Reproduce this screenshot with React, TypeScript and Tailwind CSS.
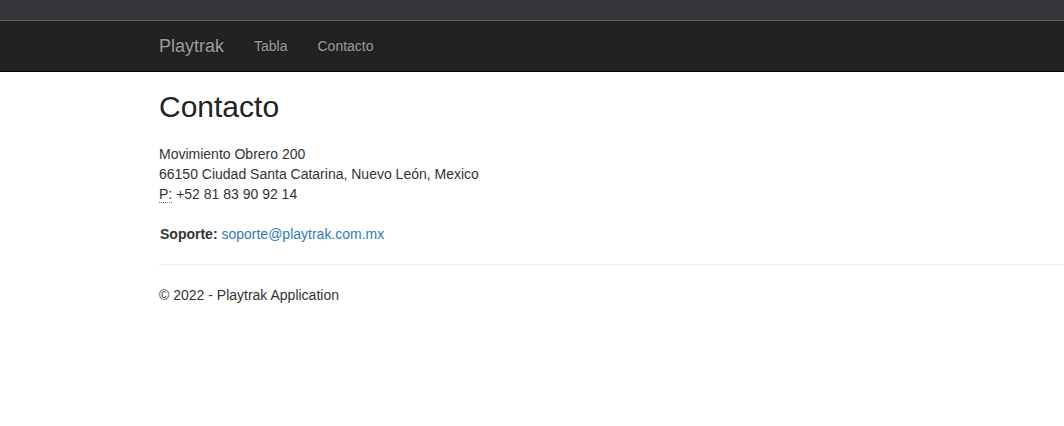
export default function App() {
  return (
    <div className="min-h-screen w-full bg-white text-[14px] leading-[20px] text-[#333] font-['Liberation_Sans',Arial,sans-serif]">
      <div className="h-[20px] bg-[#35363a]" />
      <div className="h-px bg-[#5f6064]" />
      <nav className="h-[51px] border-b border-[#080808] bg-[#222]">
        <div className="flex h-[50px] items-center pl-[159px]">
          <a className="text-[18px] leading-[20px] text-[#9d9d9d] [text-shadow:0_-1px_0_rgba(0,0,0,0.25)]">
            Playtrak
          </a>
          <ul className="ml-[15px] flex">
            <li>
              <a className="block px-[15px] text-[#9d9d9d] [text-shadow:0_-1px_0_rgba(0,0,0,0.25)]">
                Tabla
              </a>
            </li>
            <li>
              <a className="block px-[15px] text-[#9d9d9d] [text-shadow:0_-1px_0_rgba(0,0,0,0.25)]">
                Contacto
              </a>
            </li>
          </ul>
        </div>
      </nav>

      <main className="pl-[159px]">
        <h2 className="mt-[18px] mb-[21px] text-[30px] leading-[33px] font-medium text-[#222]">
          Contacto
        </h2>
        <address className="mb-[20px] not-italic">
          Movimiento Obrero 200
          <br />
          66150 Ciudad Santa Catarina, Nuevo León, Mexico
          <br />
          <abbr
            title="Phone"
            className="cursor-help border-b border-dotted border-[#777] no-underline"
          >
            P:
          </abbr>{" "}
          +52 81 83 90 92 14
        </address>
        <address className="mb-[20px] pl-px not-italic">
          <strong>Soporte:</strong>{" "}
          <a className="text-[#337ab7]" href="#">
            soporte@playtrak.com.mx
          </a>
        </address>
        <hr className="mb-[20px] border-t border-[#eee]" />
        <footer>
          <p>© 2022 - Playtrak Application</p>
        </footer>
      </main>
    </div>
  );
}
